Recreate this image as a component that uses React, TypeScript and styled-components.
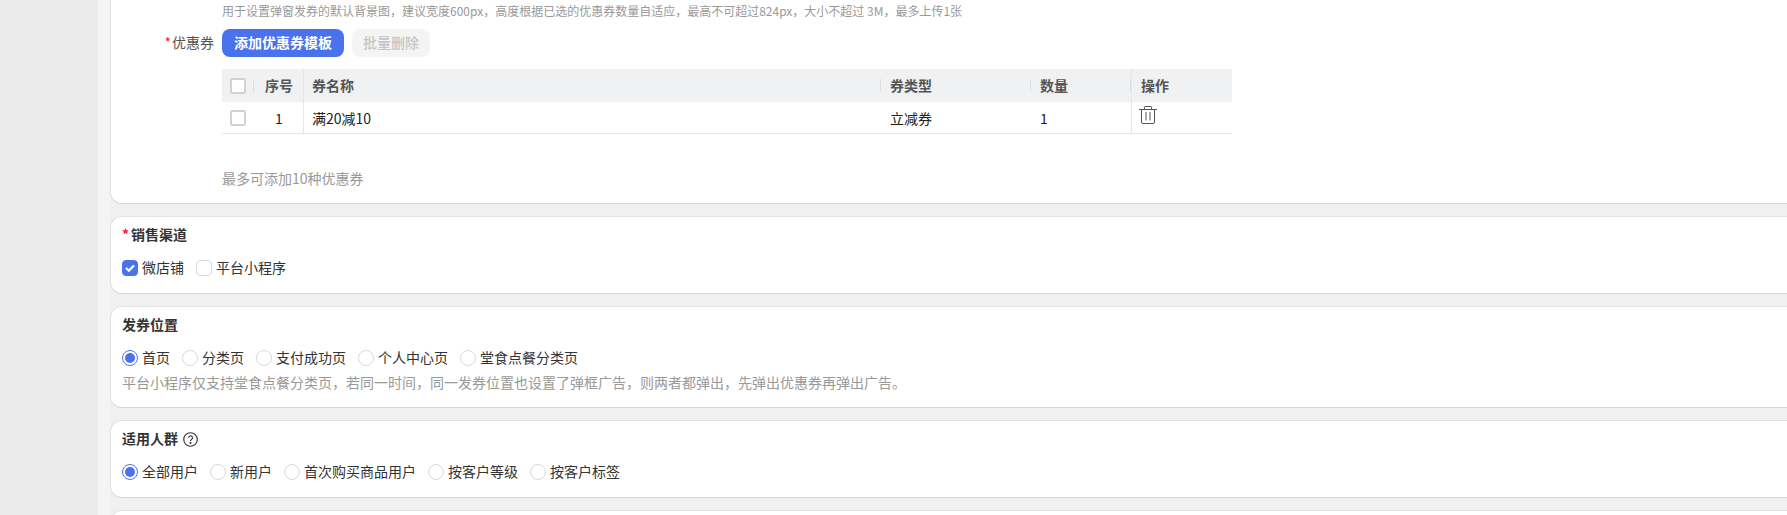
import React from "react";
import styled, { createGlobalStyle } from "styled-components";

const Global = createGlobalStyle`
  html, body { margin: 0; padding: 0; height: 515px; overflow: hidden; background: #ebebeb; }
  #root { height: 515px; }
  * { box-sizing: border-box; }
`;
const Page = styled.div`
  display: flex; height: 515px; overflow: hidden;
  font-family: "Noto Sans CJK SC", "Liberation Sans", sans-serif;
  font-size: 14px; color: #333;
`;
const Gutter = styled.div`width: 98px; flex: none; background: #ebebeb;`;
const Main = styled.div`
  flex: 1; min-width: 0; height: 515px; overflow: hidden; padding-left: 12px;
  background: linear-gradient(90deg, #f3f4f6 0, #f3f4f6 12px, #f0f0f0 12px);
  display: flex; flex-direction: column; gap: 12px;
`;
const Card = styled.section<{ $h: number; $first?: boolean }>`
  flex: none; height: ${(p) => p.$h}px; background: #fff;
  border: 1px solid #e2e2e2; border-bottom-color: #d6d6d6; border-right: 0;
  ${(p) => (p.$first ? "border-top: 0;" : "")}
  border-radius: ${(p) => (p.$first ? "0 0 0 12px" : "12px 0 0 12px")};
  padding: 0 0 0 11px;
`;
const Form = styled.div`padding-left: 100px;`;
const Hint = styled.div`font-size: 12px; line-height: 20px; color: #999; padding-top: 1px;`;
const FieldRow = styled.div`display: flex; align-items: center; gap: 8px; margin-top: 8px; margin-left: -60px;`;
const Label = styled.span`width: 52px; text-align: right; white-space: nowrap; color: #555; line-height: 18px; margin-bottom: 2px;`;
const Star = styled.span`color: #f5222d; margin-right: 1px;`;
const TitleStar = styled(Star)`margin-right: 2px;`;
const Primary = styled.button`
  height: 28px; width: 122px; border: 0; border-radius: 8px; background: #4a72ec; color: #fff;
  font: 700 14px "Noto Sans CJK SC", sans-serif; padding: 0 0 2px;
`;
const Ghost = styled.button`
  height: 28px; width: 78px; border: 0; border-radius: 8px; background: #f4f4f4; color: #c4c4c4;
  font: 500 14px "Noto Sans CJK SC", sans-serif; padding: 0 0 2px;
`;
const Table = styled.div`width: 1010px; margin-top: 12px;`;
const columns = "36px 45px 577px 150px 101px 101px";
const Head = styled.div`
  display: grid; grid-template-columns: ${columns}; height: 33px; background: #f0f1f3;
  align-items: center; font-weight: 700; color: #555;
  & > div { padding-bottom: 2px; }
`;
const Row = styled.div`
  display: grid; grid-template-columns: ${columns}; height: 32px; border-bottom: 1px solid #e6e6e6;
  align-items: center; color: #222;
`;
const Cell = styled.div`height: 100%; display: flex; align-items: center;`;
const CheckCell = styled(Cell)`padding-left: 8px;`;
const HeadCheckCell = styled(CheckCell)`
  &&& { padding-bottom: 0; }
  &::after { content: ""; width: 1px; height: 12px; background: #dcdddf; margin-left: 7px; }
`;
const IndexCell = styled(Cell)`justify-content: center; padding-right: 3px;`;
const LinedCell = styled(Cell)`border-left: 1px solid #e6e6e6; padding-left: 9px;`;
const NameCell = styled(LinedCell)`padding-left: 8px;`;
const PlainCell = styled(Cell)`padding-left: 10px;`;
const SepCell = styled(Cell)`
  &::before { content: ""; width: 1px; height: 12px; background: #dcdddf; margin-right: 9px; }
`;
const EndSepCell = styled(SepCell)`
  &::after { content: ""; width: 1px; height: 12px; background: #dcdddf; margin-left: auto; }
`;
const Box = styled.span`
  width: 16px; height: 16px; flex: none; border-radius: 2px; background: #fff; border: 2px solid #d2d2d2;
`;
const OptionBox = styled.span<{ $on?: boolean }>`
  width: 16px; height: 16px; flex: none; border-radius: 4px; display: inline-flex; align-items: center; justify-content: center;
  border: 1px solid ${(p) => (p.$on ? "#4a72ec" : "#d9d9d9")}; background: ${(p) => (p.$on ? "#4a72ec" : "#fff")};
`;
const Note = styled.div`line-height: 20px; color: #999; margin-top: 34px;`;
const Title = styled.div`font-weight: 700; color: #333; line-height: 20px; margin-top: 7px; display: flex; align-items: center; gap: 5px;`;
const Options = styled.div`display: flex; gap: 12px; margin-top: 14px; align-items: center;`;
const Option = styled.label`display: inline-flex; gap: 4px; align-items: center; color: #333;`;
const OptionText = styled.span`line-height: 18px; margin-bottom: 2px;`;
const Radio = styled.span<{ $on?: boolean }>`
  width: 16px; height: 16px; flex: none; border-radius: 50%; background: #fff;
  border: 1px solid ${(p) => (p.$on ? "#4a72ec" : "#d9d9d9")}; display: inline-flex; align-items: center; justify-content: center;
  &::after { content: ""; width: 10px; height: 10px; border-radius: 50%; background: ${(p) => (p.$on ? "#4a72ec" : "transparent")}; }
`;
const Desc = styled.div`line-height: 20px; color: #999; margin-top: 4px;`;
const TrashIcon = styled.svg`align-self: flex-start; margin: 4px 0 0 -2px;`;
const HelpIcon = styled.svg`margin-top: 2px;`;

const Trash = () => (
  <TrashIcon width="18" height="18" viewBox="0 0 18 18" fill="none" stroke="#555" strokeWidth="1">
    <path d="M0 3.5h18M5.5 3.5V1.2q0-.7.7-.7h5.6q.7 0 .7.7v2.3M2.5 3.5v12.5q0 1.5 1.5 1.5h10q1.5 0 1.5-1.5V3.5M7 6v8.5M11 6v8.5" />
  </TrashIcon>
);
const Help = () => (
  <HelpIcon width="15" height="15" viewBox="0 0 16 16" fill="none" stroke="#333" strokeWidth="1.2">
    <circle cx="8" cy="8" r="7.2" />
    <path d="M5.9 6.2a2.1 2.1 0 1 1 3.2 1.8c-.7.4-1.1.8-1.1 1.6" />
    <circle cx="8" cy="11.8" r=".5" fill="#333" />
  </HelpIcon>
);
const Group = ({ items, on }: { items: string[]; on: number }) => (
  <Options>
    {items.map((t, i) => (
      <Option key={t}>
        <Radio $on={i === on} />
        <OptionText>{t}</OptionText>
      </Option>
    ))}
  </Options>
);

export default function App() {
  return (
    <Page>
      <Global />
      <Gutter />
      <Main>
        <Card $first $h={204}>
          <Form>
            <Hint>用于设置弹窗发券的默认背景图，建议宽度600px，高度根据已选的优惠券数量自适应，最高不可超过824px，大小不超过 3M，最多上传1张</Hint>
            <FieldRow>
              <Label><Star>*</Star>优惠券</Label>
              <Primary>添加优惠券模板</Primary>
              <Ghost>批量删除</Ghost>
            </FieldRow>
            <Table>
              <Head>
                <HeadCheckCell><Box /></HeadCheckCell>
                <IndexCell>序号</IndexCell>
                <NameCell>券名称</NameCell>
                <SepCell>券类型</SepCell>
                <EndSepCell>数量</EndSepCell>
                <LinedCell>操作</LinedCell>
              </Head>
              <Row>
                <CheckCell><Box /></CheckCell>
                <IndexCell>1</IndexCell>
                <NameCell>满20减10</NameCell>
                <PlainCell>立减券</PlainCell>
                <PlainCell>1</PlainCell>
                <LinedCell><Trash /></LinedCell>
              </Row>
            </Table>
            <Note>最多可添加10种优惠券</Note>
          </Form>
        </Card>
        <Card $h={78}>
          <Title><span><TitleStar>*</TitleStar>销售渠道</span></Title>
          <Options>
            <Option>
              <OptionBox $on>
                <svg width="12" height="12" viewBox="0 0 12 12" fill="none" stroke="#fff" strokeWidth="2.2"><path d="M2 6l2.8 2.8 5.2-5.4" /></svg>
              </OptionBox>
              <OptionText>微店铺</OptionText>
            </Option>
            <Option><OptionBox /><OptionText>平台小程序</OptionText></Option>
          </Options>
        </Card>
        <Card $h={102}>
          <Title>发券位置</Title>
          <Group on={0} items={["首页", "分类页", "支付成功页", "个人中心页", "堂食点餐分类页"]} />
          <Desc>平台小程序仅支持堂食点餐分类页，若同一时间，同一发券位置也设置了弹框广告，则两者都弹出，先弹出优惠券再弹出广告。</Desc>
        </Card>
        <Card $h={78}>
          <Title>适用人群<Help /></Title>
          <Group on={0} items={["全部用户", "新用户", "首次购买商品用户", "按客户等级", "按客户标签"]} />
        </Card>
        <Card $h={40} />
      </Main>
    </Page>
  );
}
